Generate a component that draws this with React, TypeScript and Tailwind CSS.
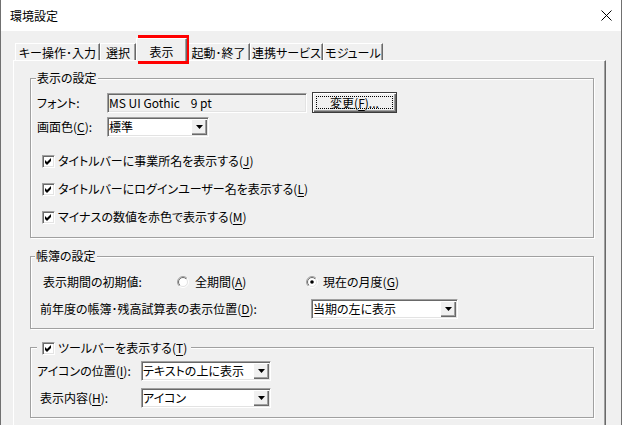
import { useId, type ReactNode } from 'react'

const sunken =
  'border border-t-[#a0a0a0] border-l-[#a0a0a0] border-b-white border-r-white shadow-[inset_1px_1px_0_#696969,inset_-1px_-1px_0_#e3e3e3]'

function Key({ children }: { children: ReactNode }) {
  return <span className="underline underline-offset-[2px]">{children}</span>
}

function CheckBox() {
  return (
    <span className={`flex h-[13px] w-[13px] shrink-0 items-center justify-center bg-white ${sunken}`}>
      <svg width="9" height="9" viewBox="0 0 9 9">
        <path d="M1 3l2 2 4-4v3L3 8 1 6z" fill="#000" />
      </svg>
    </span>
  )
}

function Radio({ checked }: { checked?: boolean }) {
  const id = useId().replace(/[^a-zA-Z0-9]/g, '')
  return (
    <svg width="12" height="12" viewBox="0 0 12 12" className="shrink-0">
      <defs>
        <linearGradient id={`o${id}`} x1="0" y1="0" x2="1" y2="1">
          <stop offset="0.5" stopColor="#a0a0a0" />
          <stop offset="0.5" stopColor="#ffffff" />
        </linearGradient>
        <linearGradient id={`i${id}`} x1="0" y1="0" x2="1" y2="1">
          <stop offset="0.5" stopColor="#696969" />
          <stop offset="0.5" stopColor="#e3e3e3" />
        </linearGradient>
      </defs>
      <circle cx="6" cy="6" r="5.5" fill="none" stroke={`url(#o${id})`} />
      <circle cx="6" cy="6" r="4.5" fill="#fff" stroke={`url(#i${id})`} />
      {checked ? <circle cx="6" cy="6" r="1.8" fill="#000" /> : null}
    </svg>
  )
}

function Combo({ value, width }: { value: string; width: string }) {
  return (
    <div className={`flex h-[20px] shrink-0 items-center bg-white ${width} ${sunken}`}>
      <span className="flex-1 whitespace-nowrap pl-[1px]">{value}</span>
      <span className="mr-[1px] flex h-[16px] w-[16px] shrink-0 items-center justify-center bg-[#f0f0f0] shadow-[inset_1px_1px_0_#fff,inset_-1px_-1px_0_#696969,inset_-2px_-2px_0_#a0a0a0]">
        <svg width="7" height="4" viewBox="0 0 7 4">
          <path d="M0 0h7L3.5 4z" fill="#000" />
        </svg>
      </span>
    </div>
  )
}

function CheckRow({ children }: { children: ReactNode }) {
  return (
    <div className="flex h-[16px] items-center gap-[3px] pl-[11px]">
      <CheckBox />
      <span className="whitespace-nowrap">{children}</span>
    </div>
  )
}

function Group({ legend, legendClass, className, children }: { legend: ReactNode; legendClass: string; className: string; children: ReactNode }) {
  return (
    <div className={`relative w-[564px] border border-[#a0a0a0] shadow-[inset_1px_1px_0_#fff,1px_1px_0_#fff] ${className}`}>
      <div className={`absolute flex items-center whitespace-nowrap bg-[#f0f0f0] ${legendClass}`}>{legend}</div>
      {children}
    </div>
  )
}

const tabs = [
  { label: 'キー操作･入力', width: 'w-[85px]' },
  { label: '選択', width: 'w-[36px]' },
  { label: '表示', width: 'w-[51px]', active: true },
  { label: '起動･終了', width: 'w-[63px]' },
  { label: '連携サービス', width: 'w-[73px]' },
  { label: 'モジュール', width: 'w-[60px]' }
]

export default function App() {
  return (
    <div className="relative flex h-[425px] w-[622px] flex-col overflow-hidden border-x border-[#707070] font-['Noto_Sans_CJK_JP',sans-serif] text-[12px] leading-[14px] text-black [font-feature-settings:'palt']">
      <div className="flex h-[31px] shrink-0 items-center justify-between bg-white pl-[9px] pr-[9px]">
        <span>環境設定</span>
        <svg width="11" height="11" viewBox="0 0 11 11">
          <path d="M0.5 0.5l10 10M10.5 0.5l-10 10" stroke="#000" strokeWidth="1" />
        </svg>
      </div>

      <div className="flex flex-1 flex-col bg-[#f0f0f0] pl-[12px] pt-[7px]">
        <div className="flex h-[22px] items-end pl-[2px]">
          {tabs.map((tab) =>
            tab.active ? (
              <div
                key={tab.label}
                className={`relative z-10 mb-[-1px] flex h-[23px] shrink-0 items-center justify-center whitespace-nowrap border-l border-t border-r border-l-white border-t-white border-r-[#696969] bg-[#f0f0f0] pt-[3px] shadow-[inset_-1px_0_0_#a0a0a0] ${tab.width}`}
              >
                {tab.label}
              </div>
            ) : (
              <div
                key={tab.label}
                className={`flex h-[17px] shrink-0 items-center justify-center whitespace-nowrap border-l border-t border-r border-l-white border-t-white border-r-[#696969] pt-[1px] shadow-[inset_-1px_0_0_#a0a0a0] ${tab.width}`}
              >
                {tab.label}
              </div>
            )
          )}
        </div>

        <div className="flex w-[593px] flex-1 flex-col gap-[18px] border-l border-t border-r border-l-white border-t-white border-r-[#696969] pl-[16px] pt-[17px] shadow-[inset_-1px_0_0_#a0a0a0]">
          <Group legend="表示の設定" legendClass="-top-[8px] left-[5px] px-[1px]" className="h-[160px]">
            <div className="mt-[13px] flex h-[21px] items-center pl-[6px]">
              <span className="w-[70px] shrink-0 whitespace-nowrap">フォント:</span>
              <div className={`flex h-[20px] w-[200px] shrink-0 items-center bg-[#f0f0f0] pl-[1px] ${sunken}`}>
                <span className="whitespace-pre">MS UI Gothic    9 pt</span>
              </div>
              <button className="relative ml-[5px] flex h-[21px] w-[85px] shrink-0 items-center justify-center border border-[#3c3c3c] bg-[#f0f0f0] shadow-[inset_1px_1px_0_#fff,inset_-1px_-1px_0_#696969,inset_-2px_-2px_0_#a0a0a0]">
                <span className="absolute inset-[3px] border border-dotted border-black" />
                <span className="whitespace-nowrap">
                  変更(<Key>F</Key>)...
                </span>
              </button>
            </div>
            <div className="mt-[4px] flex h-[20px] items-center pl-[6px]">
              <span className="w-[70px] shrink-0 whitespace-nowrap">
                画面色(<Key>C</Key>):
              </span>
              <Combo value="標準" width="w-[102px]" />
            </div>
            <div className="mt-[16px] flex flex-col gap-[12px]">
              <CheckRow>
                タイトルバーに事業所名を表示する(<Key>J</Key>)
              </CheckRow>
              <CheckRow>
                タイトルバーにログインユーザー名を表示する(<Key>L</Key>)
              </CheckRow>
              <CheckRow>
                マイナスの数値を赤色で表示する(<Key>M</Key>)
              </CheckRow>
            </div>
          </Group>

          <Group legend="帳簿の設定" legendClass="-top-[8px] left-[4px] px-[1px]" className="h-[73px]">
            <div className="mt-[15px] flex h-[20px] items-center pl-[12px]">
              <span className="w-[134px] shrink-0 whitespace-nowrap">表示期間の初期値:</span>
              <div className="flex w-[129px] shrink-0 items-center gap-[6px]">
                <Radio />
                <span className="whitespace-nowrap">
                  全期間(<Key>A</Key>)
                </span>
              </div>
              <div className="flex items-center gap-[5px]">
                <Radio checked />
                <span className="whitespace-nowrap">
                  現在の月度(<Key>G</Key>)
                </span>
              </div>
            </div>
            <div className="mt-[7px] flex h-[20px] items-center pl-[9px]">
              <span className="w-[271px] shrink-0 whitespace-nowrap">
                前年度の帳簿･残高試算表の表示位置(<Key>D</Key>):
              </span>
              <Combo value="当期の左に表示" width="w-[147px]" />
            </div>
          </Group>

          <Group
            legend={
              <>
                <CheckBox />
                <span className="whitespace-nowrap">
                  ツールバーを表示する(<Key>T</Key>)
                </span>
              </>
            }
            legendClass="-top-[8px] left-[6px] h-[16px] gap-[3px] pl-[5px] pr-[4px]"
            className="h-[71px]"
          >
            <div className="mt-[13px] flex h-[20px] items-center pl-[6px]">
              <span className="w-[104px] shrink-0 whitespace-nowrap">
                アイコンの位置(<Key>I</Key>):
              </span>
              <Combo value="テキストの上に表示" width="w-[130px]" />
            </div>
            <div className="mt-[7px] flex h-[20px] items-center pl-[9px]">
              <span className="w-[101px] shrink-0 whitespace-nowrap">
                表示内容(<Key>H</Key>):
              </span>
              <Combo value="アイコン" width="w-[130px]" />
            </div>
          </Group>
        </div>
      </div>

      <div className="pointer-events-none absolute left-[137px] top-[35px] h-[29px] w-[51px] border-[3px] border-[#ff0000]" />
    </div>
  )
}
